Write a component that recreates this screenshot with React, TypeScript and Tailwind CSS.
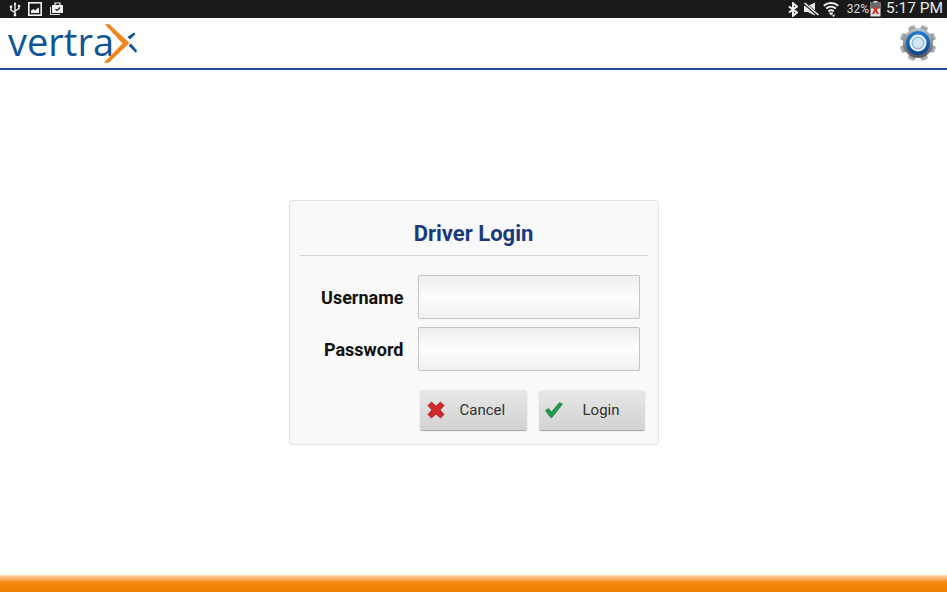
function UsbIcon() {
  return (
    <svg width="12" height="15" viewBox="0 0 12 15" fill="none" stroke="#f2f2f2" strokeWidth="1.4">
      <path d="M6 1v12.5M6 10.5 2 8V5.5M6 9l4-2.500V4.500" />
      <circle cx="6" cy="13" r="1.400" fill="#f2f2f2" stroke="none" />
      <rect x="0.800" y="3.500" width="2.400" height="2.400" fill="#f2f2f2" stroke="none" />
      <circle cx="10" cy="4" r="1.300" fill="#f2f2f2" stroke="none" />
      <path d="M6 0 4.500 2.500h3z" fill="#f2f2f2" stroke="none" />
    </svg>
  );
}

function PictureIcon() {
  return (
    <svg width="14" height="14" viewBox="0 0 14 14">
      <rect x="0.800" y="0.800" width="12.400" height="12.400" fill="#1a1a1a" stroke="#f2f2f2" strokeWidth="1.600" />
      <path d="M3 11V8.500L5.500 7l2 1.500L10 5.500l1 1V11z" fill="#f2f2f2" />
    </svg>
  );
}

function BagIcon() {
  return (
    <svg width="15" height="14" viewBox="0 0 15 14">
      <path d="M1 5h1v7h9v1H1z" fill="#e4e4e4" />
      <path d="M3 3h11v8H3z" fill="#f2f2f2" />
      <path d="M6 3V1h5v2" fill="none" stroke="#f2f2f2" strokeWidth="1.200" />
      <path d="m6.500 7 1.500 1.500 3-3" fill="none" stroke="#1a1a1a" strokeWidth="1.100" />
    </svg>
  );
}

function BluetoothIcon() {
  return (
    <svg width="10" height="15" viewBox="0 0 10 14" fill="none" stroke="#f2f2f2" strokeWidth="2">
      <path d="M1 4l8 6-4 3.200V.8l4 3.200-8 6" />
    </svg>
  );
}

function MuteIcon() {
  return (
    <svg width="15" height="14" viewBox="0 0 15 13">
      <path d="M0 3.500h4L11 0v13L4 9.500H0z" fill="#e8e8e8" />
      <path d="M0 0.500 14 12.500" stroke="#1a1a1a" strokeWidth="3" />
      <path d="M0.500 0.500 14.500 12.500" stroke="#f2f2f2" strokeWidth="1.500" />
    </svg>
  );
}

function WifiIcon() {
  return (
    <svg width="16" height="17" viewBox="0 0 16 16" fill="none" stroke="#f2f2f2" strokeWidth="2">
      <path d="M0.800 4.200c4.200-3.600 10.200-3.600 14.400 0" />
      <path d="M3.200 7c2.800-2.300 6.800-2.300 9.600 0" />
      <path d="M5.300 9.700c1.600-1.200 3.800-1.200 5.400 0" />
      <path d="M5.500 11h5L8 14z" fill="#f2f2f2" stroke="none" />
      <path d="M8.500 13h4l-2 3z" fill="#bdbdbd" stroke="none" />
    </svg>
  );
}

function BatteryIcon() {
  return (
    <svg width="11" height="16" viewBox="0 0 11 16">
      <rect x="3.500" y="0" width="4" height="2" fill="#d8d8d8" />
      <rect x="0.500" y="1.500" width="10" height="14" fill="#e0e0e0" />
      <rect x="0.500" y="1.500" width="10" height="6" fill="#6a6a6a" />
      <path d="M2 6h2l1.500 2L7 6h2L6.800 9 9 13H7L5.500 10.500 4 13H2l2.200-4z" fill="#d42a1e" />
    </svg>
  );
}

function GearIcon() {
  const teeth = [0, 45, 90, 135, 180, 225, 270, 315];
  return (
    <svg width="38" height="38" viewBox="0 0 38 38">
      <defs>
        <linearGradient id="gearGrey" x1="0" y1="0" x2="0" y2="1">
          <stop offset="0" stopColor="#c2c5c8" />
          <stop offset="1" stopColor="#4f5357" />
        </linearGradient>
        <linearGradient id="gearBlue" x1="0" y1="0" x2="0" y2="1">
          <stop offset="0" stopColor="#1f7fd0" />
          <stop offset="1" stopColor="#0c468f" />
        </linearGradient>
      </defs>
      {teeth.map((deg) => (
        <rect key={deg} x="15.500" y="0.500" width="7" height="8" rx="1.500" fill="url(#gearGrey)" transform={`rotate(${deg + 22.5} 19 19)`} />
      ))}
      <circle cx="19" cy="19" r="15" fill="url(#gearGrey)" />
      <circle cx="19" cy="19" r="12" fill="url(#gearBlue)" />
      <circle cx="19" cy="19" r="8.500" fill="#eef3f7" />
      <circle cx="19" cy="19" r="6.500" fill="#8dbbe0" />
      <circle cx="19" cy="19" r="5" fill="#d4e6f4" />
    </svg>
  );
}

function LogoMark() {
  return (
    <svg width="34" height="41" viewBox="0 0 34 41" className="-ml-[10px] shrink-0">
      <path d="M1 1.500 5 1 25.500 20 4.500 40 0 39.500 18.500 20.500z" fill="#f0861e" />
      <path d="M23.500 14 30 9.500 31.500 11 26 16.500z" fill="#0f5595" />
      <path d="M24.500 22.500 27 20.500 33 27.500 32 30z" fill="#0f5595" />
    </svg>
  );
}

function CancelIcon() {
  return (
    <svg width="18" height="18" viewBox="0 0 18 18">
      <path d="M1 4.500 4.500 1 9 5.200 13.500 1 17 4.500 13 9l4 4.500-3.500 3.500L9 13l-4.500 4L1 13.500 5 9z" fill="#cf2a2a" stroke="#a81c1c" strokeWidth="0.800" strokeLinejoin="round" />
    </svg>
  );
}

function LoginIcon() {
  return (
    <svg width="18" height="18" viewBox="0 0 18 18">
      <path d="M0.500 9.500 3.500 7.500 6.500 11 14.500 1.500 17.500 3 7 16.500 5.500 16.500z" fill="#1f9a4e" stroke="#15713a" strokeWidth="0.600" strokeLinejoin="round" />
    </svg>
  );
}

function Field({ label }: { label: string }) {
  return (
    <div className="flex items-center">
      <span className="w-[104px] shrink-0 text-right text-[18px] font-bold text-[#111]">{label}</span>
      <div className="ml-[14px] h-[44px] w-[222px] shrink-0 rounded-[2px] border border-[#c4c4c4] bg-gradient-to-b from-[#eeeeee] via-[#fdfdfd] to-[#f1f1f1]" />
    </div>
  );
}

export default function App() {
  return (
    <div className="flex h-[592px] w-[947px] flex-col overflow-hidden bg-white font-['Roboto',sans-serif]">
      {/* status bar */}
      <div className="flex h-[18px] shrink-0 items-center justify-between bg-[#1a1a1a] pl-[9px] pr-[4px]">
        <div className="flex items-center gap-[7px]">
          <UsbIcon />
          <PictureIcon />
          <BagIcon />
        </div>
        <div className="flex items-center text-[#e8e8e8]">
          <BluetoothIcon />
          <span className="ml-[6px]"><MuteIcon /></span>
          <span className="ml-[4px]"><WifiIcon /></span>
          <span className="ml-[8px] text-[12px] leading-none text-[#d8d8d8]">32%</span>
          <span className="ml-[1px]"><BatteryIcon /></span>
          <span className="ml-[5px] text-[15.500px] leading-none">5:17 PM</span>
        </div>
      </div>

      {/* header */}
      <div className="flex h-[52px] shrink-0 items-center justify-between border-b-2 border-[#1f4e9c] pl-[8px] pr-[10px]">
        <div className="flex items-center">
          <span className="-mt-[4px] text-[38px] font-medium leading-none text-[#0f5595] font-['Open_Sans',sans-serif]">vertra</span>
          <LogoMark />
        </div>
        <GearIcon />
      </div>

      {/* login */}
      <div className="flex flex-1 items-center justify-center">
        <div className="flex h-[245px] w-[370px] flex-col rounded-[4px] border border-[#e2e2e2] bg-[#f9f9f9] px-[10px]">
          <div className="flex h-[55px] shrink-0 items-center justify-center border-b border-[#d4d4d4] pt-[19px] pb-[8px] text-[22px] font-bold text-[#1b3a7a]">
            Driver Login
          </div>
          <div className="mt-[19px] flex flex-col gap-[8px]">
            <Field label="Username" />
            <Field label="Password" />
          </div>
          <div className="mt-[19px] flex justify-end gap-[12px] pr-[3px]">
            <button className="flex h-[40px] w-[107px] items-center rounded-[2px] bg-gradient-to-b from-[#e8e8e8] to-[#d2d2d2] pl-[7px] text-[15px] text-[#333] shadow-[0_1px_1px_rgba(0,0,0,0.35)]">
              <CancelIcon />
              <span className="ml-[15px]">Cancel</span>
            </button>
            <button className="flex h-[40px] w-[106px] items-center rounded-[2px] bg-gradient-to-b from-[#e8e8e8] to-[#d2d2d2] pl-[6px] text-[15px] text-[#333] shadow-[0_1px_1px_rgba(0,0,0,0.35)]">
              <LoginIcon />
              <span className="ml-[20px]">Login</span>
            </button>
          </div>
        </div>
      </div>

      {/* footer */}
      <div className="h-[17px] shrink-0 bg-gradient-to-b from-[#fbd9ad] via-[#f58a0c] via-40% to-[#f07f00]" />
    </div>
  );
}
